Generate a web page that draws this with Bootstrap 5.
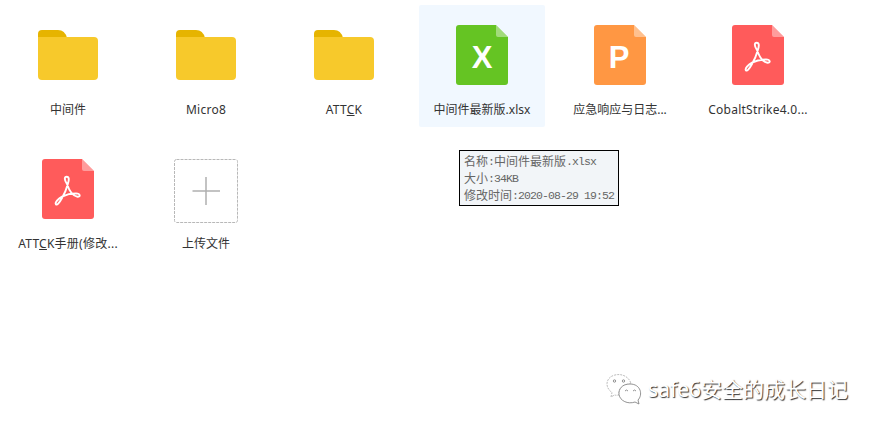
<!DOCTYPE html>
<html lang="zh-CN">
<head>
<meta charset="utf-8">
<meta name="viewport" content="width=device-width, initial-scale=1">
<title>文件</title>
<link href="https://cdn.jsdelivr.net/npm/bootstrap@5.3.0/dist/css/bootstrap.min.css" rel="stylesheet">
<style>
body { font-family: "Noto Sans", "Noto Sans CJK SC", sans-serif; color: #333; height: 428px; overflow: hidden; }
.file-grid { display: grid; grid-template-columns: repeat(6, 126px); grid-auto-rows: 122px; gap: 12px; padding: 5px; }
.tile { padding-top: 20px; border-radius: 2px; }
.tile.active { background: #f1f8ff; }
.icon-box { height: 64px; }
.tile svg { display: block; }
.icon-box.folder { padding-top: 5px; }
.file-name { font-size: 12px; line-height: 18px; margin-top: 12px; white-space: nowrap; }
.latin { letter-spacing: .25px; }
.letter { font: bold 31px "Liberation Sans", sans-serif; fill: #fff; text-anchor: middle; }
.tip { left: 459px; top: 150px; width: 160px; height: 56px; border: 1px solid #000; background: #f2f5f8; color: #666; font: 12px/17px "Noto Sans CJK SC", sans-serif; padding: 1px 4px; white-space: nowrap; }
.tip div { height: 17px; }
.tip span { font: 11.5px/19px "Liberation Mono", monospace; letter-spacing: -.9px; vertical-align: top; }
.signature { right: 29px; top: 372px; height: 34px; gap: 6px; }
.signature b { font: 400 21px/34px "Noto Sans", "Noto Sans CJK SC", sans-serif; color: #fff; text-shadow: 1px 1px 1px #333; white-space: nowrap; }
</style>
</head>
<body class="bg-white position-relative">
<svg width="0" height="0" class="position-absolute">
  <defs>
    <symbol id="folder" viewBox="0 0 60 50">
      <path d="M0 12V4Q0 0 4 0H20Q27 0 29 8V12Z" fill="#e6b400"/>
      <path d="M0 7H56Q60 7 60 11V46Q60 50 56 50H4Q0 50 0 46Z" fill="#f7c92b"/>
    </symbol>
    <symbol id="sheet" viewBox="0 0 52 60">
      <path d="M3 0H40L52 12V57Q52 60 49 60H3Q0 60 0 57V3Q0 0 3 0Z" fill="currentColor"/>
      <path d="M40 0L52 12H42Q40 12 40 10Z" fill="#fff" fill-opacity=".4"/>
    </symbol>
    <symbol id="acrobat" viewBox="0 0 52 60">
      <path d="M25 25C22 20.500 22.300 17.700 24.700 17.700C27.300 17.700 27.300 21 25.700 25.500C24.500 30 22.300 35 20 39C17 44.500 15 46.500 13.900 45.300C12.700 43.500 16 39.800 20 37.700C25 35.200 30 34.400 34 34.400C38.500 34.500 38.800 37.800 35.500 37.700C30.500 37 27 31 25 25Z" fill="none" stroke="#fff" stroke-width="1.900" stroke-linejoin="round"/>
    </symbol>
  </defs>
</svg>
<main class="file-grid">
  <div class="tile text-center"><div class="icon-box folder d-flex justify-content-center"><svg width="60" height="50"><use href="#folder"/></svg></div><div class="file-name">中间件</div></div>
  <div class="tile text-center"><div class="icon-box folder d-flex justify-content-center"><svg width="60" height="50"><use href="#folder"/></svg></div><div class="file-name latin">Micro8</div></div>
  <div class="tile text-center"><div class="icon-box folder d-flex justify-content-center"><svg width="60" height="50"><use href="#folder"/></svg></div><div class="file-name latin">ATT<u>C</u>K</div></div>
  <div class="tile active text-center"><div class="icon-box d-flex justify-content-center"><svg width="52" height="60" color="#65c423"><use href="#sheet"/><text class="letter" x="26" y="43">X</text></svg></div><div class="file-name">中间件最新版.xlsx</div></div>
  <div class="tile text-center"><div class="icon-box d-flex justify-content-center"><svg width="52" height="60" color="#ff9743"><use href="#sheet"/><text class="letter" x="25" y="43">P</text></svg></div><div class="file-name">应急响应与日志...</div></div>
  <div class="tile text-center"><div class="icon-box d-flex justify-content-center"><svg width="52" height="60" color="#ff5b5b"><use href="#sheet"/><use href="#acrobat"/></svg></div><div class="file-name latin">CobaltStrike4.0...</div></div>
  <div class="tile text-center"><div class="icon-box d-flex justify-content-center"><svg width="52" height="60" color="#ff5b5b"><use href="#sheet"/><use href="#acrobat"/></svg></div><div class="file-name latin">ATT<u>C</u>K手册(修改...</div></div>
  <div class="tile text-center"><div class="icon-box d-flex justify-content-center"><svg width="64" height="64" fill="none"><rect x=".5" y=".5" width="63" height="63" rx="2" stroke="#b8b8b8" stroke-dasharray="3 1"/><path d="M18.500 32H46M32 18V46" stroke="#b0b0b0" stroke-width="1.500"/></svg></div><div class="file-name">上传文件</div></div>
</main>
<div class="tip position-absolute">
  <div>名称<span>:</span>中间件最新版<span>.xlsx</span></div>
  <div>大小<span>:34KB</span></div>
  <div>修改时间<span>:2020-08-29 19:52</span></div>
</div>
<div class="signature position-absolute d-flex align-items-center">
  <svg width="36" height="32" viewBox="0 0 36 32" fill="#fff" stroke="#777" stroke-width=".8">
    <path d="M5 24L6 19.500C-2 14 0 4 9 2C17 0 24 5 25 11C18 11 12 15 13 22Q10 22.500 8.500 22Z" stroke="#aaa" stroke-dasharray="2 1"/>
    <path d="M24 11C16 11 12.500 16 13 21.500C14 28 22 31.500 29 29L33 31L32 27C37 22 35 11 24 11Z"/>
    <g fill="none"><circle cx="8.500" cy="8" r="1.200"/><circle cx="17.500" cy="8" r="1.200"/><path d="M19 18Q20.500 16 22 18M27 18Q28.500 16 30 18"/></g>
  </svg>
  <b>safe6安全的成长日记</b>
</div>
<script src="https://cdn.jsdelivr.net/npm/bootstrap@5.3.0/dist/js/bootstrap.bundle.min.js"></script>
</body>
</html>
